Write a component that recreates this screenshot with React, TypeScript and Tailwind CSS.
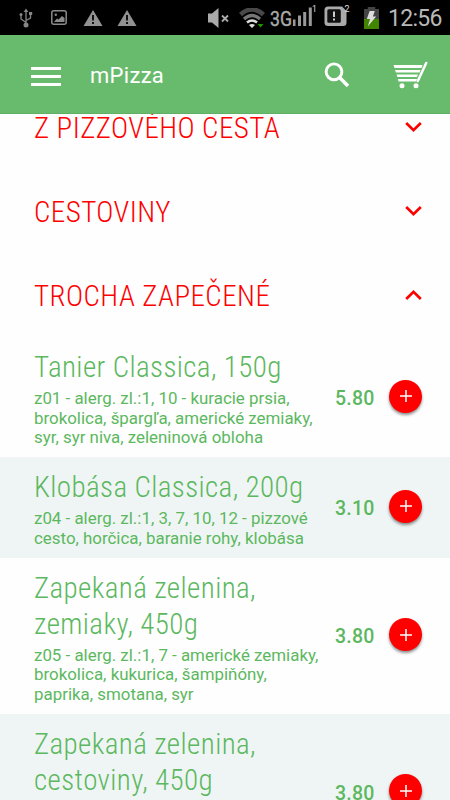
import React from "react";

type Dish = { title: string[]; desc: string[]; price: string };

const sections = [
  { name: "Z PIZZOVÉHO CESTA", open: false },
  { name: "CESTOVINY", open: false },
  { name: "TROCHA ZAPEČENÉ", open: true },
];

const dishes: Dish[] = [
  {
    title: ["Tanier Classica, 150g"],
    desc: ["z01 - alerg. zl.:1, 10 - kuracie prsia,", "brokolica, špargľa, americké zemiaky,", "syr, syr niva, zeleninová obloha"],
    price: "5.80",
  },
  {
    title: ["Klobása Classica, 200g"],
    desc: ["z04 - alerg. zl.:1, 3, 7, 10, 12 - pizzové", "cesto, horčica, baranie rohy, klobása"],
    price: "3.10",
  },
  {
    title: ["Zapekaná zelenina,", "zemiaky, 450g"],
    desc: ["z05 - alerg. zl.:1, 7 - americké zemiaky,", "brokolica, kukurica, šampiňóny,", "paprika, smotana, syr"],
    price: "3.80",
  },
  {
    title: ["Zapekaná zelenina,", "cestoviny, 450g"],
    desc: [],
    price: "3.80",
  },
];

function Warning() {
  return (
    <svg className="h-[18px] w-5 shrink-0" viewBox="0 0 20 18">
      <path d="M10 1 19.500 17H.5z" fill="#929292" />
      <path d="M9 6h2v5.500H9zM9 13h2v2H9z" fill="#111" />
    </svg>
  );
}

function StatusBar() {
  return (
    <div className="flex h-[35px] shrink-0 items-center bg-black text-[#b8b8b8]">
      <svg className="ml-[19px] h-5 w-[14px] shrink-0" viewBox="0 0 14 20" fill="none" stroke="#858585" strokeWidth="1.300">
        <path d="M7 3v13M7 14.500 2 11V7M7 12.500l4.500-2.500V6" />
        <path d="M4.600 4 7 .5 9.400 4zM10 4h3.200v3H10z" fill="#858585" stroke="none" />
        <circle cx="2" cy="6.500" r="1.500" fill="#858585" stroke="none" />
        <circle cx="7" cy="17" r="2.500" fill="#858585" stroke="none" />
      </svg>
      <svg className="ml-[18px] h-[15px] w-4 shrink-0" viewBox="0 0 16 15">
        <rect x=".8" y=".8" width="14.400" height="13.400" rx="2" fill="none" stroke="#8a8a8a" strokeWidth="1.500" />
        <circle cx="4.800" cy="4.800" r="1.200" fill="#8a8a8a" />
        <path d="M3 12l3-3.500 1.500 1L11 6l2.500 2v4z" fill="#8a8a8a" />
      </svg>
      <div className="ml-4 flex gap-[14px]">
        <Warning />
        <Warning />
      </div>
      <svg className="ml-[71px] h-5 w-[22px] shrink-0" viewBox="0 0 22 20">
        <path d="M0 5.500h4L10.500 0v20L4 14.500H0z" fill="#aaa" />
        <path d="M14 7.500l6 6m0-6l-6 6" stroke="#aaa" strokeWidth="1.800" />
      </svg>
      <svg className="ml-[9px] h-5 w-[27px] shrink-0" viewBox="0 0 27 20" fill="none">
        <path d="M1.500 6.500Q13 -3.500 24.500 6.500" stroke="#484848" strokeWidth="4.500" />
        <path d="M5 11Q13 4 21 11" stroke="#777" strokeWidth="3.200" />
        <path d="M8 14.500Q13 10.500 18 14.500" stroke="#ddd" strokeWidth="2.500" />
        <path d="M10 17q3-2 6 0l-3 3z" fill="#ddd" />
        <path d="M18.500 16h6l-3 3.500z" fill="#249000" />
      </svg>
      <svg className="ml-1 h-[27px] w-12 shrink-0" viewBox="0 0 48 27">
        <text x="0" y="21.500" fontFamily="Roboto" fontSize="19.500" fontWeight="400" fill="#aaa" stroke="#aaa" strokeWidth=".4" textLength="22" lengthAdjust="spacingAndGlyphs">3G</text>
        <path d="M23 15.500h2.500v6.500H23zM28 11.500h3V22h-3zM33.200 8h3v14h-3zM38.800 3.500h3V22h-3z" fill="#999" />
        <text x="42" y="8" fontFamily="Roboto" fontSize="8.500" fill="#ddd">1</text>
      </svg>
      <svg className="ml-[6px] h-[27px] w-[26px] shrink-0" viewBox="0 0 26 27">
        <path d="M4 2.500h14l4.500 4.500v11.500q0 3.500-3.500 3.500H4q-3.500 0-3.500-3.500V6q0-3.500 3.500-3.500z" fill="#aaa" />
        <rect x="3.300" y="5.200" width="13.500" height="13.500" rx="1.500" fill="#101010" />
        <path d="M9 7.500h2v5.500H9zM9 14.500h2v2H9z" fill="#ccc" />
        <text x="20.500" y="7.500" fontFamily="Roboto" fontSize="9" fill="#ddd">2</text>
      </svg>
      <svg className="ml-[14px] h-[22px] w-[15px] shrink-0" viewBox="0 0 16 22" preserveAspectRatio="none">
        <path d="M4 0h8v2h4v20H0V2h4z" fill="#444" />
        <path d="M0 12h16v10H0z" fill="#428500" />
        <path d="M6 4h5.500L9.500 9.500H13L4 19.500 6.500 12H3z" fill="#ddd" />
      </svg>
      <span className="ml-[9px] pt-[2px] font-[Roboto] text-[23px] leading-none font-normal tracking-[-0.700px]">12:56</span>
    </div>
  );
}

function AppBar() {
  return (
    <header className="flex h-[79px] shrink-0 items-center border-b border-[#5fb064] bg-[#68bb6c] pt-[2px] text-white">
      <div className="mt-[2px] ml-[31px] flex w-[30px] flex-col gap-[5px]">
        <span className="h-[3px] bg-white" />
        <span className="h-[3px] bg-white" />
        <span className="h-[3px] bg-white" />
      </div>
      <h1 className="ml-[29px] text-[22px] font-normal tracking-[0.300px]">mPizza</h1>
      <svg className="ml-auto h-[26px] w-[26px]" viewBox="0 0 26 26" fill="none" stroke="#fff" strokeWidth="2.900">
        <circle cx="10" cy="9.800" r="7.900" />
        <path d="M15.800 15.800l8.200 8.200" strokeWidth="3.500" />
      </svg>
      <svg className="mr-[22px] ml-[43px] h-7 w-[35px]" viewBox="0 0 35 28" fill="#fff">
        <path d="M.5 4h29L28.500 7H1.500zM2 9h25.500l-1 2.500H3zM3.500 13.500H25l-1 2.500H4.500zM5 18h19l-.8 2.500H5.500z" />
        <path d="M33.200 2 24.800 20" stroke="#fff" strokeWidth="2.500" strokeLinecap="round" />
        <circle cx="9" cy="24.800" r="2.500" />
        <circle cx="23" cy="24.800" r="2.500" />
      </svg>
    </header>
  );
}

function SectionRow({ name, open }: { name: string; open: boolean }) {
  return (
    <div className="flex h-[84px] items-center justify-between pr-7 pl-[34px] text-[#ff0000]">
      <h2 className="pt-[3px] font-['Roboto_Condensed',Roboto,sans-serif] text-[29px] leading-none font-light tracking-[0.450px] whitespace-nowrap [font-stretch:75%]">{name}</h2>
      <svg className="h-[10px] w-[17px]" viewBox="0 0 17 10" fill="none" stroke="currentColor" strokeWidth="2.700">
        <path d={open ? "M1.200 9 8.500 1.900 15.800 9" : "M1.200 1 8.500 8.100 15.800 1"} />
      </svg>
    </div>
  );
}

function DishRow({ dish }: { dish: Dish }) {
  return (
    <li className="flex items-center pt-3 pb-[9px] pl-[34px] text-[#5cb860] even:bg-[#eff5f4] last:h-[156px] last:items-start">
      <div className="w-[301px] whitespace-nowrap">
        <h3 className="font-['Roboto_Condensed',Roboto,sans-serif] text-[29px] leading-[36px] font-light tracking-[0.400px] [font-stretch:75%]">
          {dish.title.map((t) => (
            <span key={t} className="block">{t}</span>
          ))}
        </h3>
        <p className="pt-1 text-[16.900px] leading-[19.700px]">
          {dish.desc.map((t) => (
            <span key={t} className="block">{t}</span>
          ))}
        </p>
      </div>
      <div className={dish.desc.length ? "-mt-1 flex items-center" : "flex items-center pt-[49px]"}>
        <span className="w-[54px] pt-1 text-[19.500px] font-medium tracking-[0.200px]">{dish.price}</span>
        <button className="-mt-px flex h-[33px] w-[33px] items-center justify-center rounded-full bg-[#ff0000] shadow-[0_2px_3px_rgba(0,0,0,0.45)]">
          <svg className="h-3 w-3" viewBox="0 0 12 12" stroke="#fff" strokeWidth="1.500">
            <path d="M6 0v12M0 6h12" />
          </svg>
        </button>
      </div>
    </li>
  );
}

export default function App() {
  return (
    <div className="flex h-[800px] w-[450px] flex-col overflow-hidden bg-[#fefefe] font-[Roboto,sans-serif]">
      <StatusBar />
      <AppBar />
      <main className="min-h-0 flex-1 overflow-hidden">
        <div className="-mt-[29px]">
          {sections.map((s) => (
            <SectionRow key={s.name} {...s} />
          ))}
          <ul>
            {dishes.map((d) => (
              <DishRow key={d.title.join(" ")} dish={d} />
            ))}
          </ul>
        </div>
      </main>
    </div>
  );
}
